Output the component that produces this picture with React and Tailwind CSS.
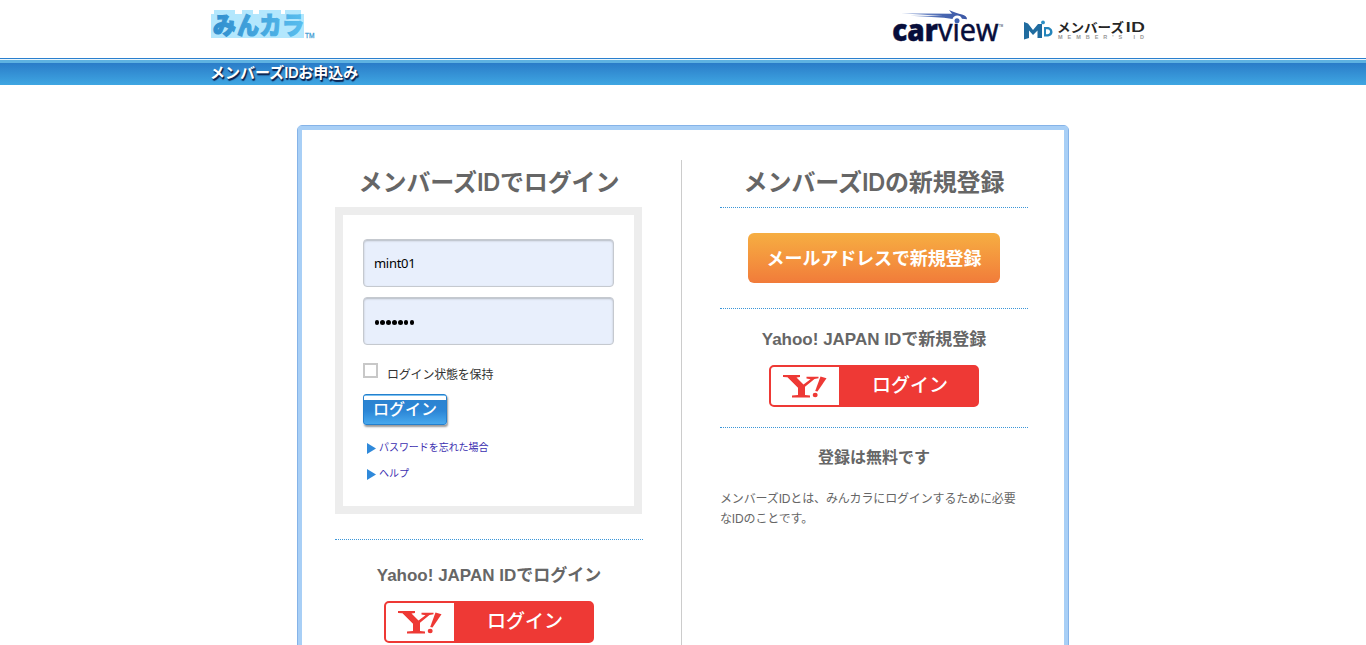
const JP = "font-['Liberation_Sans','Noto_Sans_CJK_JP',sans-serif]";

const MINKARA = [
  { ch: "み", x: 2, w: 23 },
  { ch: "ん", x: 26, w: 22 },
  { ch: "カ", x: 48.5, w: 22 },
  { ch: "ラ", x: 71, w: 22 },
];

function MinkaraLogo() {
  return (
    <svg className="block" width="112" height="40" viewBox="0 -6 112 40" role="img" aria-label="みんカラ">
      <defs>
        <linearGradient id="minkara" gradientUnits="userSpaceOnUse" x1="0" y1="0" x2="92" y2="0">
          <stop offset="0" stopColor="#2f8dcd" />
          <stop offset="1" stopColor="#58bdee" />
        </linearGradient>
      </defs>
      <path d="M0 4h3V0h21v4h4v0h3V0h11v4h6V0h22v4h4V0h16v4h3v24H0z" fill="#b3e7fd" />
      {MINKARA.map(({ ch, x, w }) => (
        <text
          key={ch}
          x={x}
          y="23.5"
          textLength={w}
          lengthAdjust="spacingAndGlyphs"
          fontFamily="Noto Sans CJK JP, sans-serif"
          fontSize="24"
          fontWeight="900"
          fill="url(#minkara)"
          stroke="url(#minkara)"
          strokeWidth="1.2"
          strokeLinejoin="miter"
        >
          {ch}
        </text>
      ))}
      <text x="94" y="28" textLength="9.5" lengthAdjust="spacingAndGlyphs" fontFamily="Liberation Sans, sans-serif" fontSize="8" fill="#3f9bd3" stroke="#3f9bd3" strokeWidth="0.3">
        TM
      </text>
    </svg>
  );
}

function CarviewLogo() {
  return (
    <svg className="block" width="114" height="44" viewBox="-1 0 114 44" role="img" aria-label="carview">
      <defs>
        <linearGradient id="streak" x1="0" x2="1">
          <stop offset="0" stopColor="#a9bbe2" />
          <stop offset="0.6" stopColor="#4a68b2" />
          <stop offset="1" stopColor="#3b57a5" />
        </linearGradient>
      </defs>
      <path d="M8 3.2 L59 3.8 L56 0 C61 2.3 65 3.8 69 4.6 C72 5.4 74 7 74 9.2 L69 8.8 A5 5 0 0 0 59.5 9 L51 7.8 L17 5.8 L50 6 Z" fill="url(#streak)" />
      <text x="-0.7" y="30.5" textLength="45.5" lengthAdjust="spacingAndGlyphs" fontFamily="Open Sans, sans-serif" fontSize="30" fontWeight="800" fill="#070d3a" stroke="#070d3a" strokeWidth="0.5">
        car
      </text>
      <text x="45" y="30.5" textLength="60.5" lengthAdjust="spacingAndGlyphs" fontFamily="Open Sans, sans-serif" fontSize="31" fill="#070d3a" stroke="#070d3a" strokeWidth="0.6">
        v&#305;ew
      </text>
      <circle cx="64" cy="10.8" r="2.5" fill="#3d61b0" />
      <text x="106" y="17" textLength="4" lengthAdjust="spacingAndGlyphs" fontFamily="Liberation Sans, sans-serif" fontSize="4" fill="#070d3a">
        TM
      </text>
    </svg>
  );
}

function MembersLogo() {
  return (
    <svg className="block" width="124" height="22" viewBox="0 0 124 22" role="img" aria-label="メンバーズID">
      <path d="M0 2 L4 3.5 L9 10 L14 4 L18 4 V18 H13.5 V10.5 L9 15 L5 10.5 V18 L0 19.5 Z" fill="#1f6b9f" />
      <circle cx="19" cy="2.4" r="1.9" fill="#2b8fc4" />
      <path d="M20 7 H23 C26 7 28.5 9 28.5 12 C28.5 15 26 16.5 23 16.5 H20 Z M22 9.3 V14.3 H23.3 C25 14.3 26 13.4 26 11.8 C26 10.2 25 9.3 23.3 9.3 Z" fill="#2585bb" fillRule="evenodd" />
      <text x="33" y="12.4" textLength="67" lengthAdjust="spacingAndGlyphs" fontFamily="Noto Sans CJK JP, sans-serif" fontSize="12.8" fontWeight="700" fill="#262626">
        メンバーズ
      </text>
      <text x="101.5" y="12.4" textLength="19.5" lengthAdjust="spacingAndGlyphs" fontFamily="Inter, sans-serif" fontSize="12.5" fontWeight="600" fill="#262626">
        ID
      </text>
      <text x="34" y="19" textLength="86" fontFamily="Liberation Sans, sans-serif" fontSize="5.5" fontWeight="700" fill="#999">
        MEMBER'S ID
      </text>
    </svg>
  );
}

function YahooButton() {
  return (
    <button className="flex h-[42px] w-[210px] items-stretch overflow-hidden rounded-[5px] border-2 border-[#ee3935] bg-[#ee3935]">
      <span className="flex w-[68px] items-center justify-center bg-white pt-px">
        <svg width="44" height="23" viewBox="0 0 44 23" fill="#ee3935" aria-hidden="true">
          <path d="M0 0H17V2L13.5 2.5L20.5 9.5L27.5 4.2L23.5 3.5V1.7H35.5V3.3L31.5 4L22 11.8V20L27 20.5V22.5H9V20.5L15 20V12.8L4.5 2.3L0 2Z" />
          <path d="M37.5 1.6L43.5 3.2L34.5 16.5L32.2 16Z" />
          <ellipse cx="32.2" cy="20" rx="2.5" ry="2.2" />
        </svg>
      </span>
      <span className="flex-1 pl-[4px] text-center font-['Noto_Sans_CJK_JP',sans-serif] text-[19px] leading-[34px] font-medium text-white">
        ログイン
      </span>
    </button>
  );
}

function Arrow() {
  return (
    <svg className="mt-[3px]" width="9" height="11" viewBox="0 0 9 11" aria-hidden="true">
      <path d="M0 0L9 5.5L0 11Z" fill="#2f89da" />
    </svg>
  );
}

function Rule() {
  return <div className="w-full shrink-0 border-t border-dotted border-[#3c96d8]" />;
}

function LatinId() {
  return <span className="font-['Inter',sans-serif] font-semibold tracking-[-0.5px]">ID</span>;
}

function LoginForm() {
  return (
    <form className="flex h-[307px] w-[307px] flex-col items-start border-8 border-[#ededed] pt-6 pl-5">
      <div className="flex h-12 w-[251px] items-center rounded-[4px] border border-[#c5c9cf] bg-[#e8effc] pt-[2px] pl-[10px] font-['Noto_Sans',sans-serif] text-[13px] tracking-[-0.3px] text-black shadow-[inset_0_1px_2px_#b5bac3]">
        mint01
      </div>
      <div className="mt-[10px] flex h-12 w-[251px] items-center gap-[1.4px] rounded-[4px] border border-[#c5c9cf] bg-[#e8effc] pt-[3px] pl-[10.5px] shadow-[inset_0_1px_2px_#b5bac3]">
        {[0, 1, 2, 3, 4, 5, 6].map((i) => (
          <span key={i} className="size-[4.5px] rounded-full bg-black" />
        ))}
      </div>
      <div className="mt-[18px] flex h-[21px]">
        <span className="size-[15px] border-2 border-[#c8c8c8] bg-white" />
        <span className="ml-[9px] text-[12px] leading-[25px] tracking-[-0.2px] text-[#333]">ログイン状態を保持</span>
      </div>
      <button className="mt-[10px] h-[31px] w-[84px] rounded-[3px] border border-[#2580cd] bg-[linear-gradient(#7cc2f2_0_1px,#ffffff_1px_5px,#2c83d0_5px,#2c86d6_55%,#48a9ee)] text-[16px] leading-[27px] font-medium text-white shadow-[1px_2px_2px_#999]">
        ログイン
      </button>
      <a className="mt-[15px] ml-[4px] flex h-[16px] gap-[3px]">
        <Arrow />
        <span className="text-[10px] leading-[15px] tracking-[-0.05px] text-[#3c2fb0]">パスワードを忘れた場合</span>
      </a>
      <a className="mt-[10px] ml-[4px] flex h-[16px] gap-[3px]">
        <Arrow />
        <span className="text-[10px] leading-[15px] text-[#3c2fb0]">ヘルプ</span>
      </a>
    </form>
  );
}

export default function App() {
  return (
    <div className={`h-[645px] overflow-hidden bg-white text-[#666] ${JP}`}>
      <header className="flex h-[58px] items-start pl-[211px]">
        <div className="pt-[4px]">
          <MinkaraLogo />
        </div>
        <div className="ml-[569px] pt-[10px]">
          <CarviewLogo />
        </div>
        <div className="ml-[18px] pt-5">
          <MembersLogo />
        </div>
      </header>
      <div className="h-[27px] bg-[linear-gradient(#2a7fce_0_1px,#e8f5fc_1px_2px,#5eb2e1_2px_5px,#2a7cc8_5px,#3fa6e2)] pl-[210px] text-[15px] leading-[29px] font-bold text-white [text-shadow:1px_1px_1px_#0b2452,1px_2px_1px_#0b2452]">
        メンバーズ
        <LatinId />
        お申込み
      </div>
      <main className="mx-auto mt-10 h-[600px] w-[772px] rounded-t-[5px] border border-[#85b3e8]">
        <div className="flex h-full rounded-t-[3px] border-4 border-b-0 border-[#a8cff6] bg-white pt-[30px] pl-[33px]">
          <section className="flex w-[308px] shrink-0 flex-col items-center">
            <h1 className="h-[47px] text-[24px] leading-[45px] font-bold tracking-[-0.1px] whitespace-nowrap">
              メンバーズ
              <LatinId />
              でログイン
            </h1>
            <div className="self-start">
              <LoginForm />
            </div>
            <div className="mt-[25px] w-full">
              <Rule />
            </div>
            <h2 className="mt-[24px] mb-[13px] text-[17px] leading-[24px] font-bold whitespace-nowrap">Yahoo! JAPAN IDでログイン</h2>
            <YahooButton />
          </section>
          <div className="ml-[38px] w-px shrink-0 bg-[#ccc]" />
          <section className="ml-[38px] flex w-[308px] shrink-0 flex-col items-center">
            <h1 className="h-[47px] text-[24px] leading-[45px] font-bold tracking-[-0.1px] whitespace-nowrap">
              メンバーズ
              <LatinId />
              の新規登録
            </h1>
            <Rule />
            <button className="mt-[25px] mb-[25px] h-[50px] w-[252px] rounded-[6px] bg-linear-to-b from-[#f6ae42] to-[#f17b3a] text-[18px] leading-[52px] font-bold tracking-[-0.1px] text-white">
              メールアドレスで新規登録
            </button>
            <Rule />
            <h2 className="mt-[19px] mb-[13px] text-[17px] leading-[24px] font-bold whitespace-nowrap">Yahoo! JAPAN IDで新規登録</h2>
            <YahooButton />
            <div className="mt-[20px] w-full">
              <Rule />
            </div>
            <h2 className="mt-[18px] text-[16px] leading-[24px] font-bold">登録は無料です</h2>
            <p className="mt-[19px] w-full text-[12px] leading-[20px] tracking-[-0.15px]">
              メンバーズIDとは、みんカラにログインするために必要
              <br />
              なIDのことです。
            </p>
          </section>
        </div>
      </main>
    </div>
  );
}
